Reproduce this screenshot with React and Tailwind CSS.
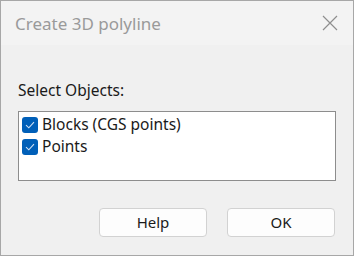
import React from 'react';

export default function App() {
  const items = ['Blocks (CGS points)', 'Points'];

  return (
    <div className="w-[354px] h-[257px] bg-white font-['Noto_Sans',sans-serif]">
      <div className="w-[354px] h-[256px] border border-[#a7a7a7] bg-[#f0f0f0] flex flex-col">
        {/* Title bar */}
        <div className="h-[44px] bg-[#f3f3f3] flex items-center justify-between pl-[14px] pr-[14px]">
          <span className="text-[17px] text-[#9a9a9a] leading-none">Create 3D polyline</span>
          <svg width="16" height="16" viewBox="0 0 16 16" className="mr-[1px]">
            <path d="M1 1 L15 15 M15 1 L1 15" stroke="#8e8e8e" strokeWidth="1.2" />
          </svg>
        </div>

        <div className="flex-1 flex flex-col px-[17px] pt-[38px]">
          <div className="text-[15.5px] text-[#1a1a1a] leading-none">Select Objects:</div>

          {/* List box */}
          <div className="mt-[12px] h-[70px] bg-white border border-[#8d8d8d] pl-[3px] pt-[5px] flex flex-col gap-[6px]">
            {items.map((label) => (
              <div key={label} className="flex items-center gap-[4px] h-[16px]">
                <div className="w-[16px] h-[16px] rounded-[3px] bg-[#005fb8] flex items-center justify-center">
                  <svg width="10" height="8" viewBox="0 0 10 8">
                    <path d="M1 4.2 L3.8 6.8 L9 1.2" stroke="#cfe0f3" strokeWidth="1.1" fill="none" />
                  </svg>
                </div>
                <span className="text-[15.5px] text-[#1a1a1a] leading-none">{label}</span>
              </div>
            ))}
          </div>

          {/* Buttons */}
          <div className="mt-[27px] flex justify-end gap-[20px] pr-[1px]">
            <button className="w-[108px] h-[29px] rounded-[4px] bg-[#fdfdfd] border border-[#d2d2d2] text-[15px] text-[#1a1a1a]">
              Help
            </button>
            <button className="w-[108px] h-[29px] rounded-[4px] bg-[#fdfdfd] border border-[#d2d2d2] text-[15px] text-[#1a1a1a]">
              OK
            </button>
          </div>
        </div>
      </div>
    </div>
  );
}
